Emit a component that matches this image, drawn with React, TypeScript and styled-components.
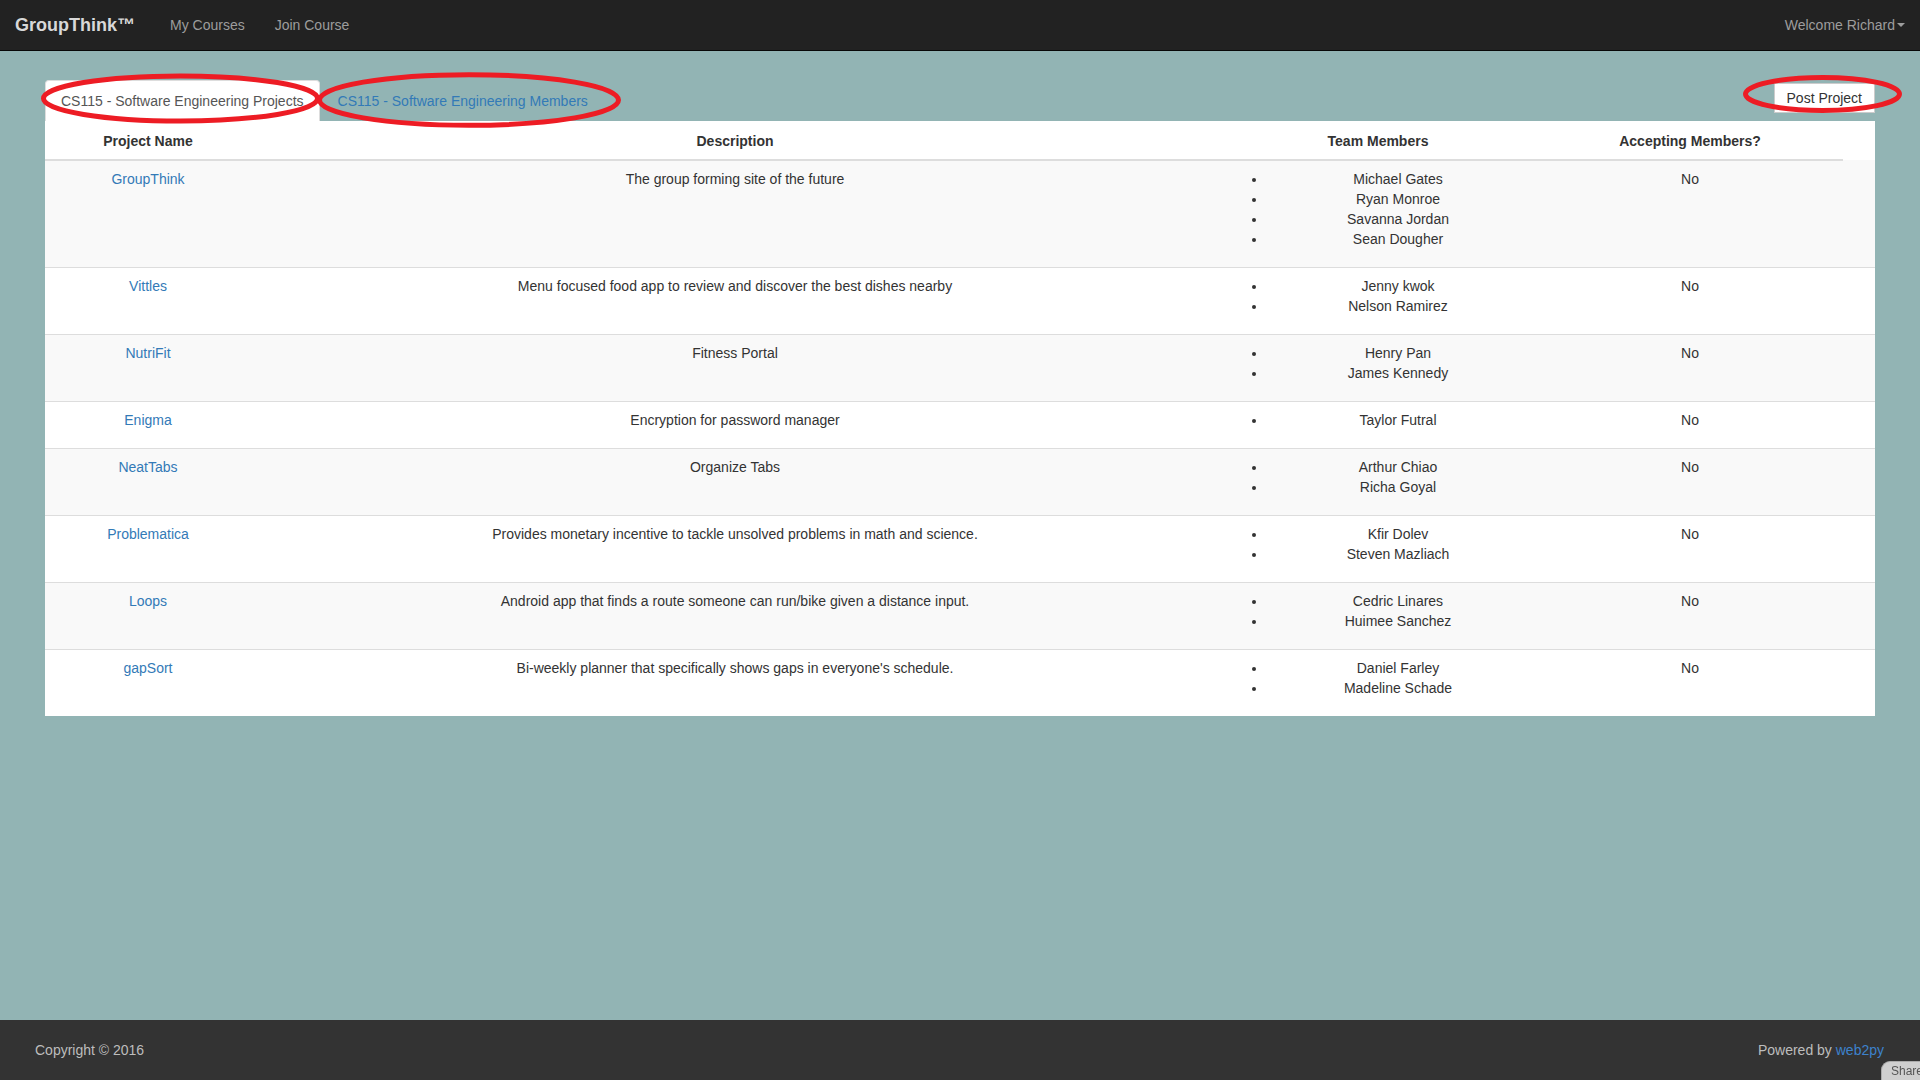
import React from "react";
import styled, { createGlobalStyle } from "styled-components";

const GlobalStyle = createGlobalStyle`
  html, body { margin: 0; padding: 0; overflow: hidden; }
  body {
    font-family: "Liberation Sans", Arial, Helvetica, sans-serif;
    font-size: 14px;
    line-height: 20px;
    color: #333;
    background: #92b4b4;
  }
  * { box-sizing: border-box; }
`;

const Page = styled.div`
  position: relative;
  min-height: 100vh;
  display: flex;
  flex-direction: column;
`;

const Navbar = styled.nav`
  height: 51px;
  background: #222;
  border-bottom: 1px solid #080808;
  display: flex;
  align-items: center;
  justify-content: space-between;
`;

const NavLeft = styled.div`
  display: flex;
  align-items: center;
`;

const Brand = styled.a`
  padding-left: 15px;
  margin-right: 20px;
  font-size: 18px;
  font-weight: bold;
  color: #d8d8d8;
  text-decoration: none;
  line-height: 20px;
`;

const NavLink = styled.a`
  padding: 0 15px;
  color: #9d9d9d;
  text-decoration: none;
  line-height: 20px;
`;

const UserMenu = styled.a`
  padding-right: 15px;
  color: #9d9d9d;
  text-decoration: none;
  display: flex;
  align-items: center;
`;

const Caret = styled.span`
  display: inline-block;
  width: 0;
  height: 0;
  margin-left: 2px;
  border-top: 4px solid #9d9d9d;
  border-left: 4px solid transparent;
  border-right: 4px solid transparent;
`;

const Main = styled.main`
  flex: 1;
  padding: 29px 45px 0;
`;

const TabRow = styled.div`
  display: flex;
  justify-content: space-between;
  align-items: flex-start;
`;

const Tabs = styled.ul`
  display: flex;
  list-style: none;
  margin: 0;
  padding: 0;
`;

const Tab = styled.li<{ $active?: boolean }>`
  margin-right: 2px;
  padding: 10px 15px;
  border: 1px solid ${(p) => (p.$active ? "#ddd" : "transparent")};
  border-bottom: none;
  border-radius: 4px 4px 0 0;
  background: ${(p) => (p.$active ? "#fff" : "transparent")};
  color: ${(p) => (p.$active ? "#555" : "#337ab7")};
  line-height: 20px;
  height: 41px;
`;

const PostButton = styled.button`
  margin-top: 3px;
  height: 30px;
  padding: 0 12px;
  background: #fff;
  border: 1px solid #ccc;
  border-radius: 0;
  color: #333;
  font-family: inherit;
  font-size: 14px;
  line-height: 20px;
`;

const Panel = styled.div`
  background: #fff;
`;

const Table = styled.table`
  width: 100%;
  border-collapse: collapse;
  table-layout: fixed;
`;

const HeadCell = styled.th`
  padding: 10px 8px 8px;
  text-align: center;
  font-weight: bold;
  vertical-align: bottom;
  border-bottom: 2px solid #ddd;
  line-height: 20px;
`;

const BodyRow = styled.tr`
  &:nth-child(odd) { background: #f9f9f9; }
  &:first-child td { border-top: none; }
`;

const Cell = styled.td`
  padding: 8px;
  text-align: center;
  vertical-align: top;
  border-top: 1px solid #ddd;
  line-height: 20px;
`;

const ProjectLink = styled.a`
  color: #337ab7;
  text-decoration: none;
`;

const MemberList = styled.ul`
  margin: 0 0 10px;
  padding-left: 40px;
  list-style: disc;
  text-align: center;
`;

const Footer = styled.footer`
  height: 60px;
  background: #333;
  color: #bdbdbd;
  display: flex;
  align-items: center;
  justify-content: space-between;
  padding: 0 36px 0 35px;
`;

const FooterLink = styled.a`
  color: #3d82cc;
  text-decoration: none;
`;

const ShareTab = styled.div`
  position: fixed;
  right: 0;
  bottom: 0;
  width: 39px;
  height: 19px;
  padding: 1px 0 0 9px;
  background: #cfcfcf;
  border: 1px solid #aaa;
  border-right: none;
  border-bottom: none;
  border-radius: 9px 0 0 0;
  color: #555;
  font-size: 12px;
  line-height: 16px;
  white-space: nowrap;
  overflow: hidden;
`;

const Annotations = styled.svg`
  position: absolute;
  top: 0;
  left: 0;
  pointer-events: none;
`;

const projects = [
  { name: "GroupThink", desc: "The group forming site of the future", members: ["Michael Gates", "Ryan Monroe", "Savanna Jordan", "Sean Dougher"] },
  { name: "Vittles", desc: "Menu focused food app to review and discover the best dishes nearby", members: ["Jenny kwok", "Nelson Ramirez"] },
  { name: "NutriFit", desc: "Fitness Portal", members: ["Henry Pan", "James Kennedy"] },
  { name: "Enigma", desc: "Encryption for password manager", members: ["Taylor Futral"] },
  { name: "NeatTabs", desc: "Organize Tabs", members: ["Arthur Chiao", "Richa Goyal"] },
  { name: "Problematica", desc: "Provides monetary incentive to tackle unsolved problems in math and science.", members: ["Kfir Dolev", "Steven Mazliach"] },
  { name: "Loops", desc: "Android app that finds a route someone can run/bike given a distance input.", members: ["Cedric Linares", "Huimee Sanchez"] },
  { name: "gapSort", desc: "Bi-weekly planner that specifically shows gaps in everyone's schedule.", members: ["Daniel Farley", "Madeline Schade"] },
];

export default function App() {
  return (
    <Page>
      <GlobalStyle />
      <Navbar>
        <NavLeft>
          <Brand href="#">GroupThink™</Brand>
          <NavLink href="#">My Courses</NavLink>
          <NavLink href="#">Join Course</NavLink>
        </NavLeft>
        <UserMenu href="#">
          Welcome Richard<Caret />
        </UserMenu>
      </Navbar>
      <Main>
        <TabRow>
          <Tabs>
            <Tab $active>CS115 - Software Engineering Projects</Tab>
            <Tab>CS115 - Software Engineering Members</Tab>
          </Tabs>
          <PostButton>Post Project</PostButton>
        </TabRow>
        <Panel>
          <Table>
            <colgroup>
              <col style={{ width: 206 }} />
              <col style={{ width: 968 }} />
              <col style={{ width: 318 }} />
              <col style={{ width: 306 }} />
              <col />
            </colgroup>
            <thead>
              <tr>
                <HeadCell>Project Name</HeadCell>
                <HeadCell>Description</HeadCell>
                <HeadCell>Team Members</HeadCell>
                <HeadCell>Accepting Members?</HeadCell>
              </tr>
            </thead>
            <tbody>
              {projects.map((p) => (
                <BodyRow key={p.name}>
                  <Cell>
                    <ProjectLink href="#">{p.name}</ProjectLink>
                  </Cell>
                  <Cell>{p.desc}</Cell>
                  <Cell>
                    <MemberList>
                      {p.members.map((m) => (
                        <li key={m}>{m}</li>
                      ))}
                    </MemberList>
                  </Cell>
                  <Cell>No</Cell>
                  <Cell />
                </BodyRow>
              ))}
            </tbody>
          </Table>
        </Panel>
      </Main>
      <Footer>
        <span>Copyright © 2016</span>
        <span>
          Powered by <FooterLink href="#">web2py</FooterLink>
        </span>
      </Footer>
      <ShareTab>Share</ShareTab>
      <Annotations width="1920" height="1080" viewBox="0 0 1920 1080">
        <ellipse cx="180.5" cy="98.5" rx="137" ry="22.5" fill="none" stroke="#ed1c24" strokeWidth="5" />
        <ellipse cx="469" cy="100" rx="149.5" ry="25.3" fill="none" stroke="#ed1c24" strokeWidth="5" />
        <ellipse cx="1822.5" cy="94" rx="77" ry="16.5" fill="none" stroke="#ed1c24" strokeWidth="5" />
      </Annotations>
    </Page>
  );
}
